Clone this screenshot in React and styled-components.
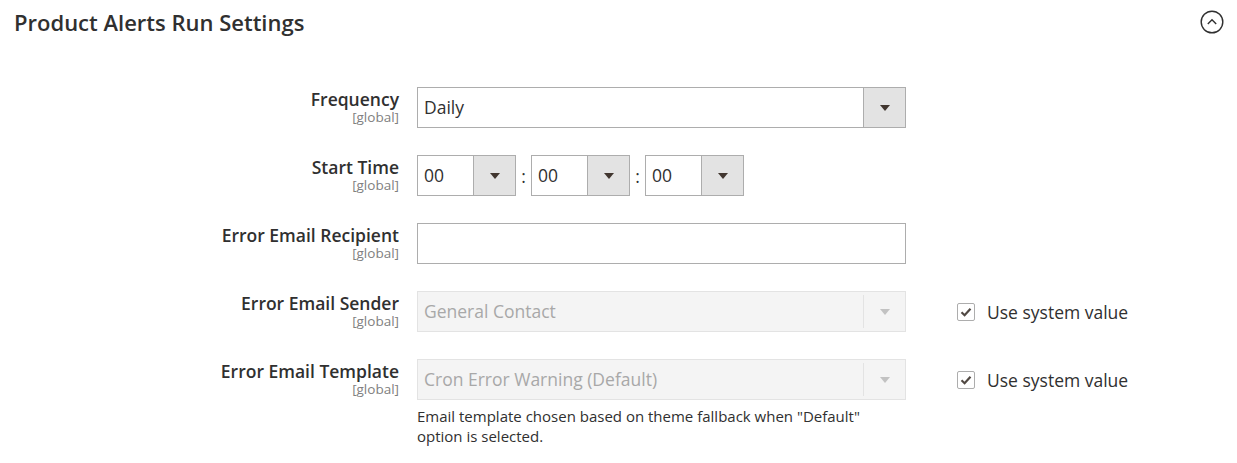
import React from 'react';
import styled, { createGlobalStyle } from 'styled-components';

const GlobalStyle = createGlobalStyle`
  body {
    margin: 0;
    background: #fff;
    font-family: "Open Sans", "Liberation Sans", sans-serif;
    color: #303030;
  }
`;

const Section = styled.div`
  width: 1237px;
`;

const Header = styled.div`
  display: flex;
  justify-content: space-between;
  align-items: center;
  height: 44px;
  padding: 0 13px 0 14px;
`;

const Title = styled.h2`
  margin: 0;
  font-size: 22px;
  font-weight: 600;
  color: #303030;
`;

const Toggle = styled.button`
  width: 24px;
  height: 24px;
  padding: 0;
  border: none;
  background: none;
  cursor: pointer;
  display: flex;
`;

const Form = styled.div`
  display: grid;
  grid-template-columns: 399px 489px auto;
  column-gap: 18px;
  row-gap: 27px;
  padding-top: 43px;
`;

const LabelCell = styled.div`
  text-align: right;
  padding-top: 2px;
`;

const LabelText = styled.div`
  font-size: 17.5px;
  font-weight: 600;
  line-height: 20px;
  color: #303030;
`;

const Scope = styled.div`
  font-size: 13.5px;
  line-height: 16px;
  color: #808080;
`;

const ControlCell = styled.div`
  display: flex;
  flex-direction: column;
`;

const Select = styled.div`
  display: flex;
  box-sizing: border-box;
  width: ${(p) => p.width || '100%'};
  height: 41px;
  border: 1px solid ${(p) => (p.disabled ? '#e3e3e3' : '#adadad')};
  background: ${(p) => (p.disabled ? '#f4f4f4' : '#fff')};
`;

const SelectValue = styled.div`
  flex: 1;
  display: flex;
  align-items: center;
  padding: 0 0 2px 6px;
  font-size: 17.5px;
  color: ${(p) => (p.disabled ? '#a8a8a8' : '#303030')};
  white-space: nowrap;
  overflow: hidden;
`;

const SelectButton = styled.div`
  width: 41px;
  display: flex;
  align-items: center;
  justify-content: center;
  background: ${(p) => (p.disabled ? '#f4f4f4' : '#e3e3e3')};
  border-left: 1px solid ${(p) => (p.disabled ? '#e3e3e3' : '#adadad')};
  margin: ${(p) => (p.disabled ? '3px 0' : '0')};
`;

const Arrow = styled.span`
  width: 0;
  height: 0;
  border-left: 5px solid transparent;
  border-right: 5px solid transparent;
  border-top: 6px solid ${(p) => (p.disabled ? '#c2c2c2' : '#41362f')};
`;

const TimeRow = styled.div`
  display: flex;
  align-items: center;
`;

const Colon = styled.span`
  width: 15px;
  text-align: center;
  font-size: 17.5px;
  color: #303030;
`;

const TextInput = styled.input`
  box-sizing: border-box;
  width: 100%;
  height: 41px;
  border: 1px solid #adadad;
  background: #fff;
  margin: 0;
  font: inherit;
`;

const Note = styled.div`
  margin-top: 6px;
  width: 460px;
  font-size: 15px;
  line-height: 20px;
  color: #303030;
`;

const UseDefault = styled.label`
  display: flex;
  align-items: center;
  height: 41px;
  padding-left: 33px;
  font-size: 17.5px;
  color: #303030;
`;

const Checkbox = styled.span`
  box-sizing: border-box;
  width: 18px;
  height: 18px;
  border: 1px solid #adadad;
  border-radius: 2px;
  background: #fff;
  margin-right: 12px;
  display: flex;
  align-items: center;
  justify-content: center;
`;

function DropSelect({ value, disabled, width }) {
  return (
    <Select disabled={disabled} width={width}>
      <SelectValue disabled={disabled}>{value}</SelectValue>
      <SelectButton disabled={disabled}>
        <Arrow disabled={disabled} />
      </SelectButton>
    </Select>
  );
}

function Label({ text }) {
  return (
    <LabelCell>
      <LabelText>{text}</LabelText>
      <Scope>[global]</Scope>
    </LabelCell>
  );
}

function SystemValue() {
  return (
    <UseDefault>
      <Checkbox>
        <svg width="12" height="10" viewBox="0 0 12 10">
          <path d="M1.5 5.2 L4.6 8.2 L10.5 1.8" fill="none" stroke="#514943" strokeWidth="2.2" />
        </svg>
      </Checkbox>
      Use system value
    </UseDefault>
  );
}

export default function App() {
  return (
    <Section>
      <GlobalStyle />
      <Header>
        <Title>Product Alerts Run Settings</Title>
        <Toggle aria-label="collapse">
          <svg width="24" height="24" viewBox="0 0 24 24">
            <circle cx="12" cy="12" r="10.8" fill="none" stroke="#303030" strokeWidth="1.4" />
            <path d="M7.8 14 L12 9.8 L16.2 14" fill="none" stroke="#303030" strokeWidth="1.4" />
          </svg>
        </Toggle>
      </Header>
      <Form>
        <Label text="Frequency" />
        <ControlCell>
          <DropSelect value="Daily" />
        </ControlCell>
        <div />

        <Label text="Start Time" />
        <ControlCell>
          <TimeRow>
            <DropSelect value="00" width="99px" />
            <Colon>:</Colon>
            <DropSelect value="00" width="99px" />
            <Colon>:</Colon>
            <DropSelect value="00" width="99px" />
          </TimeRow>
        </ControlCell>
        <div />

        <Label text="Error Email Recipient" />
        <ControlCell>
          <TextInput type="text" />
        </ControlCell>
        <div />

        <Label text="Error Email Sender" />
        <ControlCell>
          <DropSelect value="General Contact" disabled />
        </ControlCell>
        <SystemValue />

        <Label text="Error Email Template" />
        <ControlCell>
          <DropSelect value="Cron Error Warning (Default)" disabled />
          <Note>Email template chosen based on theme fallback when "Default" option is selected.</Note>
        </ControlCell>
        <SystemValue />
      </Form>
    </Section>
  );
}
